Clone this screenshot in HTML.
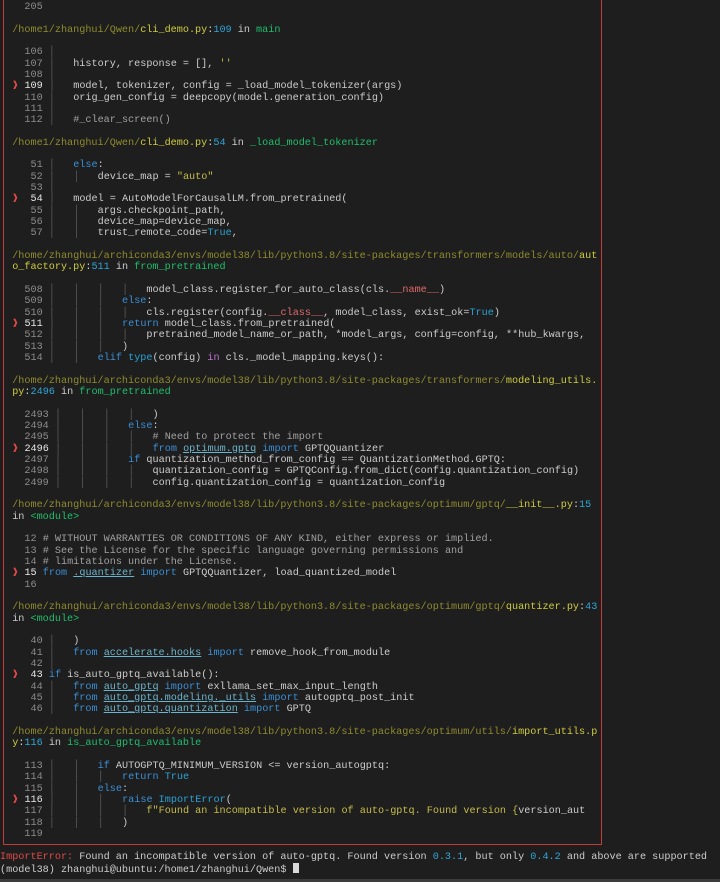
<!DOCTYPE html>
<html><head><meta charset="utf-8">
<style>
html,body{margin:0;padding:0;}
body{width:720px;height:882px;background:#1e1e1e;position:relative;overflow:hidden;}
pre{position:absolute;left:0;top:1.9px;margin:0;font-family:"Liberation Mono","DejaVu Sans Mono",monospace;font-size:10.17px;line-height:11.33px;color:#cccccc;white-space:pre;}
.box{position:absolute;left:3px;top:-5px;width:597px;height:848px;border:1px solid #c23b3b;}
.bar{position:absolute;left:0;top:879px;width:720px;height:3px;background:#3b3b3b;}
.n{color:#8c8c8c}.c{color:#e8e8e8}.m{color:#e34848}.g{color:#5f5f5f}
.p{color:#8f8b2e}.f{color:#cfcb3e}.y{color:#2fa6d6}.fn{color:#1fbf6a}
.k{color:#3a8fd6}.t{color:#2aa2d4}.pu{color:#c070d0}.d{color:#e06a6a}.s{color:#c6bd4a}
.cm{color:#a0a0a0}.u{color:#6cb4cc;text-decoration:underline}.e{color:#e04a4a}
.cur{display:inline-block;width:6px;height:10px;background:#d8d8d8;vertical-align:-1px}
</style></head><body>
<div class="box"></div>
<div class="bar"></div>
<pre>    <span class="n">205</span>

  <span class="p">/home1/zhanghui/Qwen/</span><span class="f">cli_demo.py</span>:<span class="y">109</span> in <span class="fn">main</span>

    <span class="n">106</span> <span class="g">│</span>
    <span class="n">107</span> <span class="g">│</span>   history, response = [], <span class="s">''</span>
    <span class="n">108</span> <span class="g">│</span>
  <span class="m">❱</span> <span class="c">109</span> <span class="g">│</span>   model, tokenizer, config = _load_model_tokenizer(args)
    <span class="n">110</span> <span class="g">│</span>   orig_gen_config = deepcopy(model.generation_config)
    <span class="n">111</span> <span class="g">│</span>
    <span class="n">112</span> <span class="g">│</span>   <span class="cm">#_clear_screen()</span>

  <span class="p">/home1/zhanghui/Qwen/</span><span class="f">cli_demo.py</span>:<span class="y">54</span> in <span class="fn">_load_model_tokenizer</span>

     <span class="n">51</span> <span class="g">│</span>   <span class="k">else</span>:
     <span class="n">52</span> <span class="g">│</span>   <span class="g">│</span>   device_map = <span class="s">"auto"</span>
     <span class="n">53</span> <span class="g">│</span>
  <span class="m">❱</span>  <span class="c">54</span> <span class="g">│</span>   model = AutoModelForCausalLM.from_pretrained(
     <span class="n">55</span> <span class="g">│</span>   <span class="g">│</span>   args.checkpoint_path,
     <span class="n">56</span> <span class="g">│</span>   <span class="g">│</span>   device_map=device_map,
     <span class="n">57</span> <span class="g">│</span>   <span class="g">│</span>   trust_remote_code=<span class="t">True</span>,

  <span class="p">/home/zhanghui/archiconda3/envs/model38/lib/python3.8/site-packages/transformers/models/auto/</span><span class="f">aut</span>
  <span class="f">o_factory.py</span>:<span class="y">511</span> in <span class="fn">from_pretrained</span>

    <span class="n">508</span> <span class="g">│</span>   <span class="g">│</span>   <span class="g">│</span>   <span class="g">│</span>   model_class.register_for_auto_class(cls.<span class="d">__name__</span>)
    <span class="n">509</span> <span class="g">│</span>   <span class="g">│</span>   <span class="g">│</span>   <span class="k">else</span>:
    <span class="n">510</span> <span class="g">│</span>   <span class="g">│</span>   <span class="g">│</span>   <span class="g">│</span>   cls.register(config.<span class="d">__class__</span>, model_class, exist_ok=<span class="t">True</span>)
  <span class="m">❱</span> <span class="c">511</span> <span class="g">│</span>   <span class="g">│</span>   <span class="g">│</span>   <span class="k">return</span> model_class.from_pretrained(
    <span class="n">512</span> <span class="g">│</span>   <span class="g">│</span>   <span class="g">│</span>   <span class="g">│</span>   pretrained_model_name_or_path, *model_args, config=config, **hub_kwargs,
    <span class="n">513</span> <span class="g">│</span>   <span class="g">│</span>   <span class="g">│</span>   )
    <span class="n">514</span> <span class="g">│</span>   <span class="g">│</span>   <span class="k">elif</span> <span class="t">type</span>(config) <span class="pu">in</span> cls._model_mapping.keys():

  <span class="p">/home/zhanghui/archiconda3/envs/model38/lib/python3.8/site-packages/transformers/</span><span class="f">modeling_utils.</span>
  <span class="f">py</span>:<span class="y">2496</span> in <span class="fn">from_pretrained</span>

    <span class="n">2493</span> <span class="g">│</span>   <span class="g">│</span>   <span class="g">│</span>   <span class="g">│</span>   )
    <span class="n">2494</span> <span class="g">│</span>   <span class="g">│</span>   <span class="g">│</span>   <span class="k">else</span>:
    <span class="n">2495</span> <span class="g">│</span>   <span class="g">│</span>   <span class="g">│</span>   <span class="g">│</span>   <span class="cm"># Need to protect the import</span>
  <span class="m">❱</span> <span class="c">2496</span> <span class="g">│</span>   <span class="g">│</span>   <span class="g">│</span>   <span class="g">│</span>   <span class="k">from</span> <span class="u">optimum.gptq</span> <span class="k">import</span> GPTQQuantizer
    <span class="n">2497</span> <span class="g">│</span>   <span class="g">│</span>   <span class="g">│</span>   <span class="k">if</span> quantization_method_from_config == QuantizationMethod.GPTQ:
    <span class="n">2498</span> <span class="g">│</span>   <span class="g">│</span>   <span class="g">│</span>   <span class="g">│</span>   quantization_config = GPTQConfig.from_dict(config.quantization_config)
    <span class="n">2499</span> <span class="g">│</span>   <span class="g">│</span>   <span class="g">│</span>   <span class="g">│</span>   config.quantization_config = quantization_config

  <span class="p">/home/zhanghui/archiconda3/envs/model38/lib/python3.8/site-packages/optimum/gptq/</span><span class="f">__init__.py</span>:<span class="y">15</span>
  in <span class="fn">&lt;module&gt;</span>

    <span class="n">12</span> <span class="cm"># WITHOUT WARRANTIES OR CONDITIONS OF ANY KIND, either express or implied.</span>
    <span class="n">13</span> <span class="cm"># See the License for the specific language governing permissions and</span>
    <span class="n">14</span> <span class="cm"># limitations under the License.</span>
  <span class="m">❱</span> <span class="c">15</span> <span class="k">from</span> <span class="u">.quantizer</span> <span class="k">import</span> GPTQQuantizer, load_quantized_model
    <span class="n">16</span>

  <span class="p">/home/zhanghui/archiconda3/envs/model38/lib/python3.8/site-packages/optimum/gptq/</span><span class="f">quantizer.py</span>:<span class="y">43</span>
  in <span class="fn">&lt;module&gt;</span>

     <span class="n">40</span> <span class="g">│</span>   )
     <span class="n">41</span> <span class="g">│</span>   <span class="k">from</span> <span class="u">accelerate.hooks</span> <span class="k">import</span> remove_hook_from_module
     <span class="n">42</span> <span class="g">│</span>
  <span class="m">❱</span>  <span class="c">43</span> <span class="k">if</span> is_auto_gptq_available():
     <span class="n">44</span> <span class="g">│</span>   <span class="k">from</span> <span class="u">auto_gptq</span> <span class="k">import</span> exllama_set_max_input_length
     <span class="n">45</span> <span class="g">│</span>   <span class="k">from</span> <span class="u">auto_gptq.modeling._utils</span> <span class="k">import</span> autogptq_post_init
     <span class="n">46</span> <span class="g">│</span>   <span class="k">from</span> <span class="u">auto_gptq.quantization</span> <span class="k">import</span> GPTQ

  <span class="p">/home/zhanghui/archiconda3/envs/model38/lib/python3.8/site-packages/optimum/utils/</span><span class="f">import_utils.p</span>
  <span class="f">y</span>:<span class="y">116</span> in <span class="fn">is_auto_gptq_available</span>

    <span class="n">113</span> <span class="g">│</span>   <span class="g">│</span>   <span class="k">if</span> AUTOGPTQ_MINIMUM_VERSION &lt;= version_autogptq:
    <span class="n">114</span> <span class="g">│</span>   <span class="g">│</span>   <span class="g">│</span>   <span class="k">return</span> <span class="t">True</span>
    <span class="n">115</span> <span class="g">│</span>   <span class="g">│</span>   <span class="k">else</span>:
  <span class="m">❱</span> <span class="c">116</span> <span class="g">│</span>   <span class="g">│</span>   <span class="g">│</span>   <span class="k">raise</span> <span class="t">ImportError</span>(
    <span class="n">117</span> <span class="g">│</span>   <span class="g">│</span>   <span class="g">│</span>   <span class="g">│</span>   <span class="s">f"Found an incompatible version of auto-gptq. Found version {</span>version_aut
    <span class="n">118</span> <span class="g">│</span>   <span class="g">│</span>   <span class="g">│</span>   )
    <span class="n">119</span>

<span class="e">ImportError:</span> Found an incompatible version of auto-gptq. Found version <span class="y">0.3.1</span>, but only <span class="y">0.4.2</span> and above are supported
(model38) zhanghui@ubuntu:/home1/zhanghui/Qwen$ <span class="cur"></span></pre>
</body></html>
